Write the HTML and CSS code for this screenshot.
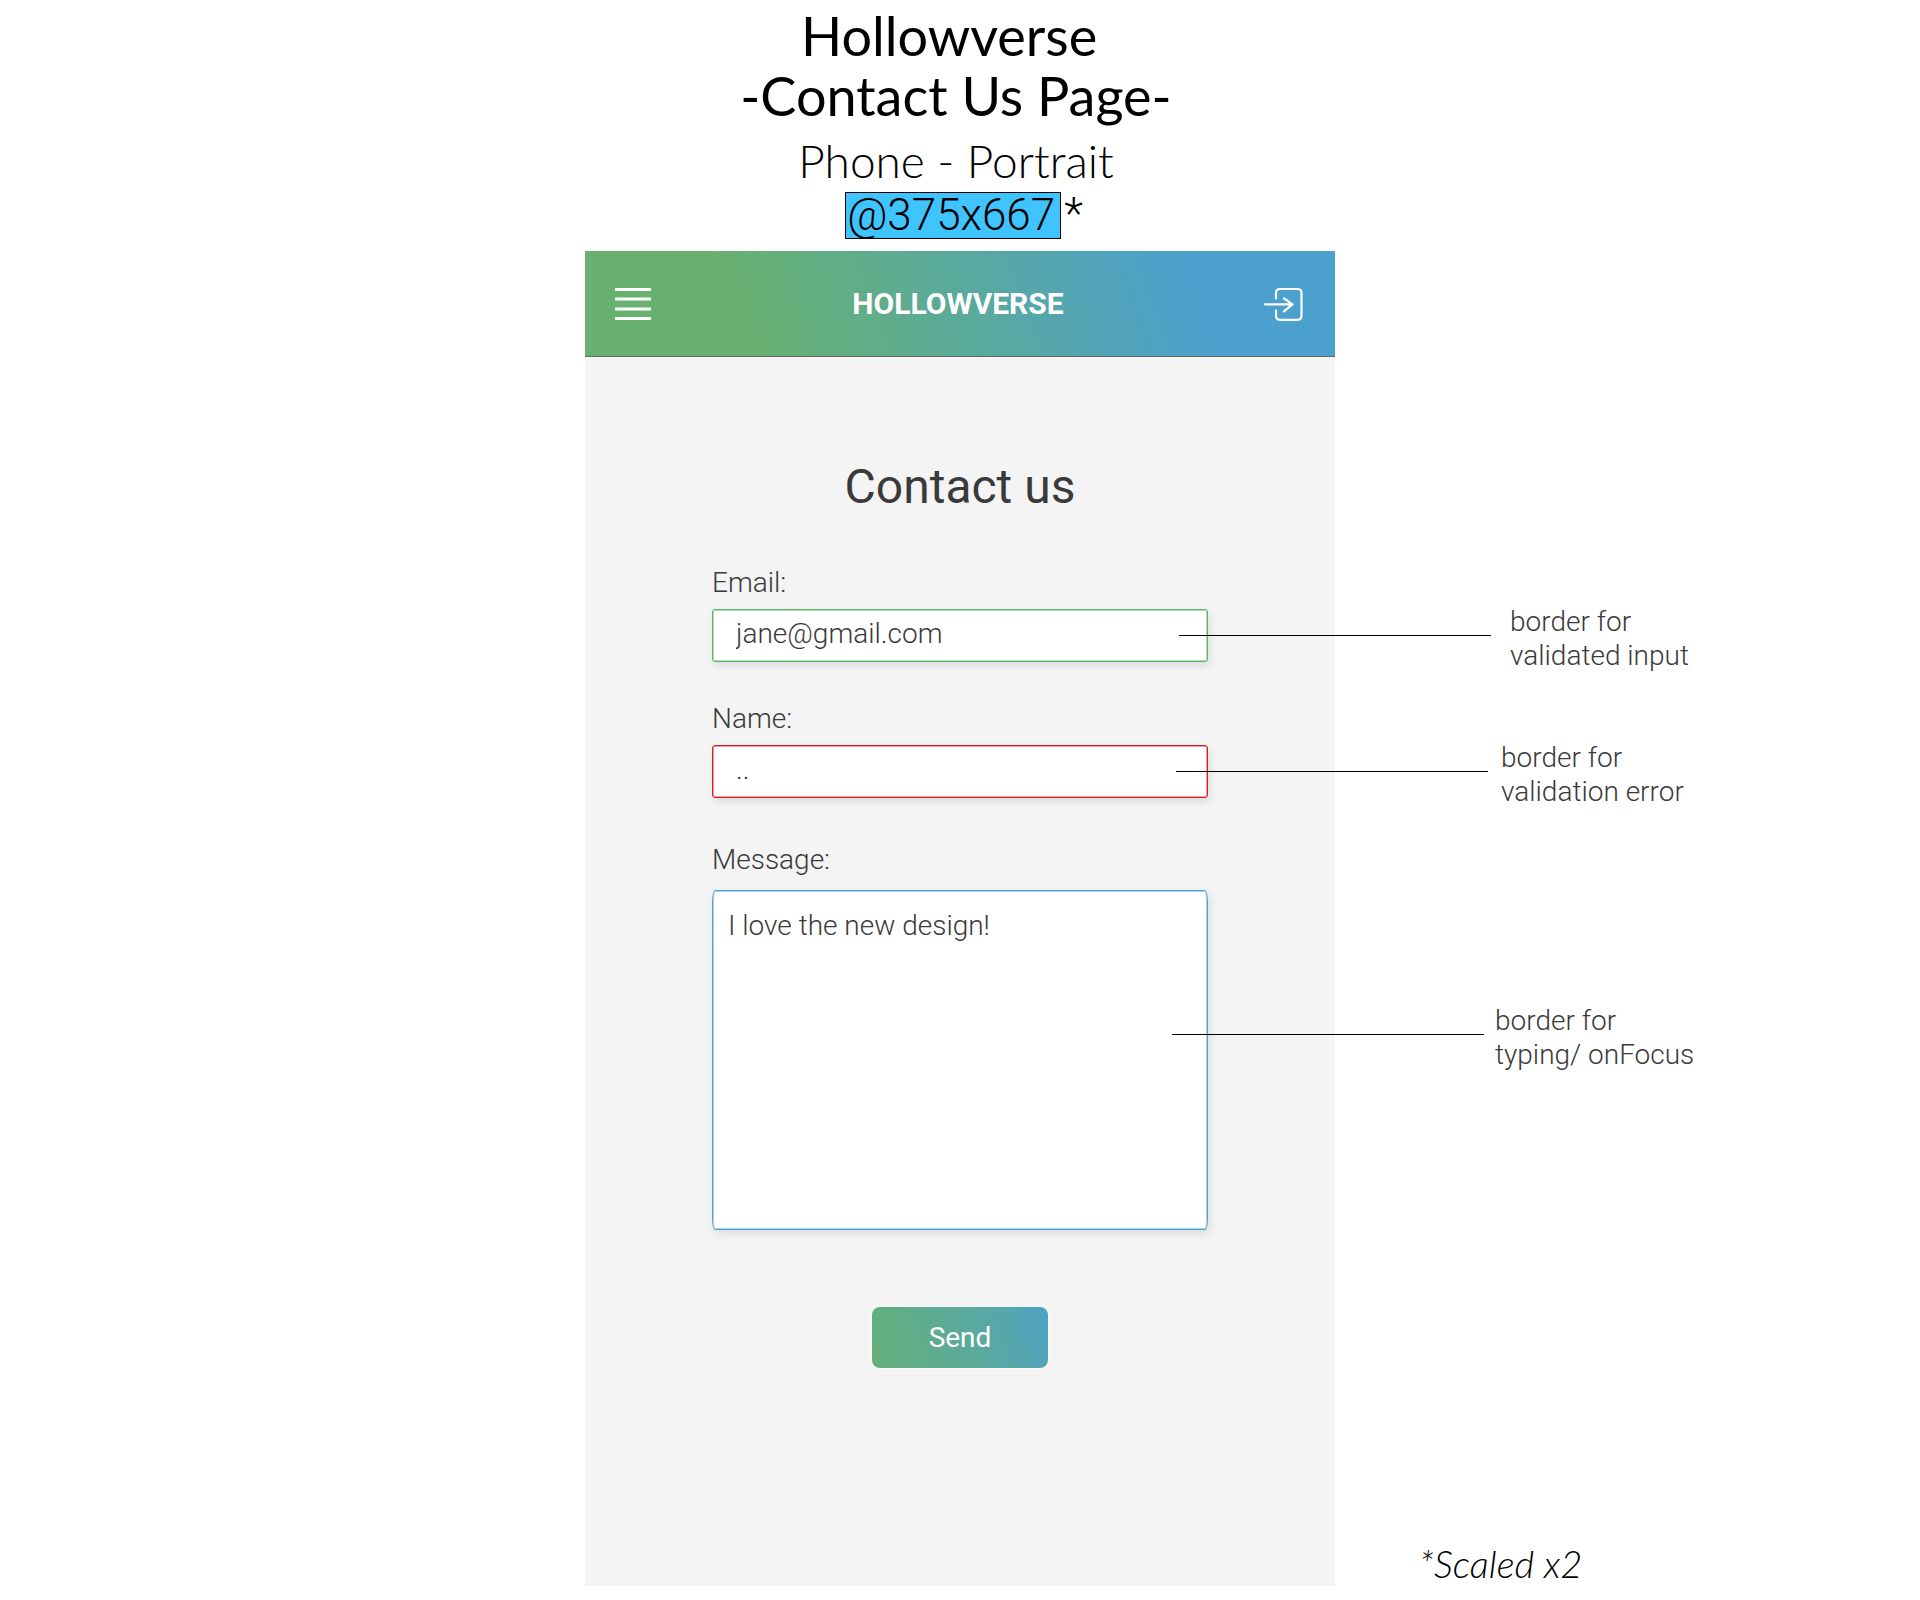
FILE: index.html
```html
<!DOCTYPE html>
<html lang="en">
<head>
<meta charset="utf-8">
<meta name="viewport" content="width=device-width, initial-scale=1">
<title>Hollowverse - Contact Us Page</title>
<link rel="stylesheet" href="styles.css">
</head>
<body>
<header class="sheet-title">
  <h1 class="sheet-name">Hollowverse&nbsp;<br>-Contact Us Page-</h1>
  <p class="sheet-device">Phone - Portrait</p>
  <p class="sheet-size"><span class="size-tag">@375x667</span><span class="size-star">*</span></p>
</header>
<div class="board">
  <main class="phone">
    <div class="topbar">
      <button class="icon-button" type="button" aria-label="Menu">
        <svg width="36" height="34" viewBox="0 0 36 34" fill="none" stroke="#fff" stroke-width="3"><path d="M0 2.5h36M0 12h36M0 22h36M0 31.5h36"/></svg>
      </button>
      <span class="brand">HOLLOWVERSE</span>
      <button class="icon-button" type="button" aria-label="Log in">
        <svg width="40" height="34" viewBox="0 0 40 34" fill="none" stroke="#fff" stroke-width="2.2" stroke-linecap="round" stroke-linejoin="round"><path d="M13 11.5V6q0-4 4-4h17.500q4 0 4 4v22.800q0 4-4 4H17q-4 0-4-4V23.500M2 17.300h27M21 11.300l8.500 6-8.500 7"/></svg>
      </button>
    </div>
    <form class="contact">
      <h2 class="contact-title">Contact us</h2>
      <div class="field">
        <label for="email">Email:</label>
        <div class="control">
          <input class="box valid" id="email" type="text" value="jane@gmail.com">
          <p class="callout callout-valid"><span>border for<br>validated input</span></p>
        </div>
      </div>
      <div class="field">
        <label for="name">Name:</label>
        <div class="control">
          <input class="box invalid" id="name" type="text" value="..">
          <p class="callout callout-invalid"><span>border for<br>validation error</span></p>
        </div>
      </div>
      <div class="field field-message">
        <label for="message">Message:</label>
        <div class="control">
          <textarea class="box focused" id="message">I love the new design!</textarea>
          <p class="callout callout-focused"><span>border for<br>typing/ onFocus</span></p>
        </div>
      </div>
      <button class="send" type="button">Send</button>
    </form>
  </main>
  <p class="footnote">*Scaled x2</p>
</div>
</body>
</html>
```
FILE: styles.css
```css
* {
  box-sizing: border-box;
}

body {
  margin: 0;
  background: #fff;
  color: #3a3a3a;
  font: 300 28px/34px Roboto, "Liberation Sans", sans-serif;
}

h1, h2, p {
  margin: 0;
}

/* Sheet heading */
.sheet-title {
  padding: 6px 8px 12px 0;
  color: #000;
  font-family: Lato, "Open Sans", sans-serif;
  text-align: center;
}

.sheet-name {
  font-size: 54px;
  font-weight: 400;
  line-height: 60px;
}

.sheet-device {
  padding-top: 9px;
  font-size: 46px;
  line-height: 52px;
}

.sheet-size {
  display: flex;
  justify-content: center;
  gap: 3px;
  margin-top: 5px;
  padding-left: 16px;
  font-family: Roboto, sans-serif;
  font-size: 44px;
  line-height: 45px;
}

.size-tag {
  padding: 0 5px 0 1px;
  border: 1px solid #000;
  background: #40c4ff;
}

/* Phone frame with its notes */
.board {
  display: grid;
  grid-template-columns: minmax(0, 1fr) minmax(0, 750px) minmax(0, 1fr);
  align-items: end;
}

.phone {
  grid-column: 2;
  background: #f4f4f4;
}

.topbar {
  display: flex;
  align-items: center;
  justify-content: space-between;
  height: 106px;
  padding: 0 32px 0 30px;
  border-bottom: 1px solid #666;
  background: linear-gradient(71deg, #69b16e 20%, #5aaa9b 50%, #4ca0ce 81%);
}

.icon-button {
  display: flex;
  padding: 0;
  border: 0;
  background: none;
}

.brand {
  padding: 1px 0 0 2px;
  color: #fff;
  font-size: 30px;
  font-weight: 700;
}

.contact {
  display: flex;
  flex-direction: column;
  padding: 102px 127px 218px;
}

.contact-title {
  margin-bottom: 51px;
  font-size: 48px;
  font-weight: 400;
  line-height: 56px;
  text-align: center;
}

.field {
  display: flex;
  flex-direction: column;
  gap: 9px;
  margin-bottom: 40px;
}

.field-message {
  gap: 13px;
  margin: 5px 0 77px;
}

.control {
  position: relative;
  display: flex;
}

.box {
  width: 100%;
  height: 53px;
  padding: 0 23px 4px;
  border: 1px solid;
  border-radius: 3px;
  outline: 0;
  background: #fff;
  color: #3a3a3a;
  font: inherit;
}

.valid {
  border-color: #5cb566;
  box-shadow: inset 0 0 0 1px #b4dcb8, 2px 4px 8px rgba(0, 0, 0, .1);
}

.invalid {
  border-color: #d41f26;
  box-shadow: inset 0 0 0 1px #ee9da0, 2px 4px 8px rgba(0, 0, 0, .1);
}

.focused {
  height: 340px;
  padding: 18px 15px;
  border-color: #4ca0ce;
  border-radius: 3px / 12px;
  box-shadow: inset 0 0 0 1px #b0d5ea, 2px 4px 8px rgba(0, 0, 0, .1);
  resize: none;
}

/* Notes drawn over the form, each with a leader line */
.callout {
  position: absolute;
  top: 26px;
  display: flex;
  align-items: center;
  height: 1px;
  white-space: nowrap;
}

.callout::before {
  content: "";
  width: 312px;
  height: 1px;
  background: #000;
}

.callout span {
  padding-top: 6px;
}

.callout-valid {
  left: calc(100% - 29px);
  gap: 19px;
}

.callout-invalid {
  left: calc(100% - 32px);
  gap: 13px;
}

.callout-focused {
  left: calc(100% - 36px);
  top: 144px;
  gap: 11px;
}

.send {
  align-self: center;
  width: 176px;
  height: 61px;
  padding: 0;
  border: 0;
  border-radius: 8px;
  background: linear-gradient(71deg, #65b078, #5aaa9b 55%, #4fa3c3);
  box-shadow: 0 0 0 1px #fbfbfb;
  color: #fff;
  font: inherit;
  font-weight: 400;
}

.footnote {
  padding: 0 0 3px 84px;
  color: #000;
  font-family: Lato, "Open Sans", sans-serif;
  font-size: 38px;
  font-style: italic;
  line-height: 40px;
}
```
